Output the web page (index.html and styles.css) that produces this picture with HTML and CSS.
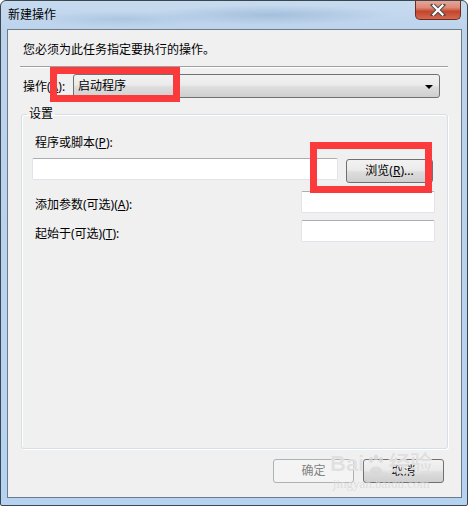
FILE: index.html
```html
<!DOCTYPE html>
<html lang="zh-CN">
<head>
    <meta charset="UTF-8">
    <meta name="viewport" content="width=device-width, initial-scale=1.0">
    <title>新建操作</title>
    <link rel="stylesheet" href="styles.css">
</head>
<body>
    <div class="window">
        <div class="titlebar">
            <span class="title">新建操作</span>
            <button class="close-button">
                <svg width="16" height="12" viewBox="0 0 16 12">
                    <path d="M3 1 L13 11 M13 1 L3 11" stroke="#4a4a4a" stroke-width="4.2" stroke-linecap="square"/>
                    <path d="M3.5 1.5 L12.5 10.5 M12.5 1.5 L3.5 10.5" stroke="#ffffff" stroke-width="2.2" stroke-linecap="square"/>
                </svg>
            </button>
        </div>

        <div class="client">
            <p class="intro">您必须为此任务指定要执行的操作。</p>
            <div class="separator"></div>

            <div class="action-row">
                <label class="action-label">操作(<u>A</u>):</label>
                <div class="combo">
                    <span>启动程序</span>
                    <span class="combo-arrow"></span>
                </div>
            </div>

            <fieldset class="settings">
                <legend>设置</legend>
                <div class="field-label">程序或脚本(<u>P</u>):</div>
                <div class="program-row">
                    <div class="textbox program-box"></div>
                    <button class="button browse-button">浏览(<u>R</u>)...</button>
                </div>
                <div class="option-row">
                    <span class="option-label">添加参数(可选)(<u>A</u>):</span>
                    <div class="textbox option-box"></div>
                </div>
                <div class="option-row">
                    <span class="option-label">起始于(可选)(<u>T</u>):</span>
                    <div class="textbox option-box"></div>
                </div>
            </fieldset>

            <div class="footer">
                <button class="button ok-button" disabled>确定</button>
                <button class="button">取消</button>
            </div>
        </div>

        <!-- annotations drawn over the screenshot -->
        <div class="mark mark-action"></div>
        <div class="mark mark-browse"></div>

        <div class="watermark">
            <div class="wm-logo">Bai<span class="wm-paw"><svg width="20" height="20" viewBox="0 0 20 20">
                <ellipse cx="5" cy="6" rx="2.2" ry="3" fill="currentColor"/>
                <ellipse cx="10" cy="3.5" rx="2.2" ry="3" fill="currentColor"/>
                <ellipse cx="15" cy="6" rx="2.2" ry="3" fill="currentColor"/>
                <path d="M4 17 C4 11 16 11 16 17 C16 20 4 20 4 17 Z" fill="currentColor"/>
            </svg></span>经验</div>
            <div class="wm-url">jingyan.baidu.com</div>
        </div>
    </div>
</body>
</html>
```

FILE: styles.css
```css
body {
    margin: 0;
    font-family: "Noto Sans", "Noto Sans CJK SC", sans-serif;
    font-size: 12px;
    color: #000;
    background-color: #ffffff;
}

.window {
    position: relative;
    width: 468px;
    height: 506px;
    box-sizing: border-box;
    border: 1px solid #3c4650;
    border-radius: 6px 6px 2px 2px;
    padding: 0 5px 7px 6px;
    display: flex;
    flex-direction: column;
    background:
        radial-gradient(ellipse 120px 10px at 270px 14px, rgba(140, 170, 205, 0.55), transparent),
        radial-gradient(ellipse 90px 8px at 120px 18px, rgba(150, 180, 210, 0.45), transparent),
        linear-gradient(to bottom, #c7dbef 0px, #bcd3ec 30px, #b5d3f1 100%);
    overflow: hidden;
}

.titlebar {
    height: 28px;
    display: flex;
    align-items: flex-start;
    padding-left: 1px;
}

.title {
    margin-top: 6px;
    line-height: 16px;
    color: #000;
}

.close-button {
    margin-left: auto;
    margin-right: 1px;
    margin-top: -1px;
    width: 46px;
    height: 20px;
    padding: 0;
    border: 1px solid #6b2b22;
    border-top: none;
    border-radius: 0 0 5px 5px;
    background: linear-gradient(to bottom, #e9a99a 0%, #dc8a78 40%, #c5452c 60%, #d2694e 100%);
    display: flex;
    justify-content: center;
    align-items: center;
    cursor: pointer;
}

.client {
    flex: 1;
    border: 1px solid #6e7c8a;
    background-color: #f0f0f0;
    padding: 12px 13px 0 13px;
}

.intro {
    margin: 0 0 0 2px;
    line-height: 16px;
}

.separator {
    margin: 8px 0 0 -1px;
    border-top: 1px solid #a0a0a0;
    border-bottom: 1px solid #ffffff;
}

.action-row {
    margin-top: 6px;
    display: flex;
    align-items: center;
    height: 24px;
}

.action-label {
    width: 52px;
    padding-left: 2px;
    box-sizing: border-box;
    line-height: 16px;
    margin-top: 2px;
}

.combo {
    width: 367px;
    height: 24px;
    box-sizing: border-box;
    border: 1px solid #707070;
    border-radius: 3px;
    background: linear-gradient(to bottom, #f2f2f2 0%, #ebebeb 45%, #dddddd 55%, #cfcfcf 100%);
    display: flex;
    align-items: center;
    padding: 0 6px 0 4px;
    line-height: 16px;
}

.combo-arrow {
    margin-left: auto;
    width: 0;
    height: 0;
    border-left: 4px solid transparent;
    border-right: 4px solid transparent;
    border-top: 4px solid #000;
    margin-top: 1px;
}

.settings {
    margin: 8px 0 0 0;
    height: 343px;
    box-sizing: border-box;
    border: 1px solid #d5dfe5;
    border-radius: 3px;
    padding: 0 12px 0 10px;
    box-shadow: inset 1px 1px 0 #ffffff, 1px 1px 0 #ffffff;
}

.settings legend {
    margin-left: -5px;
    padding: 0 2px;
    line-height: 16px;
}

.field-label {
    margin-top: 13px;
    padding-left: 3px;
    line-height: 16px;
}

.program-row {
    margin-top: 7px;
    display: flex;
    align-items: flex-start;
}

.textbox {
    height: 22px;
    box-sizing: border-box;
    background-color: #ffffff;
    border: 1px solid #e2e3ea;
    border-top-color: #abadb3;
    border-radius: 2px;
}

.program-box {
    width: 306px;
}

.button {
    height: 24px;
    box-sizing: border-box;
    border: 1px solid #707070;
    border-radius: 3px;
    background: linear-gradient(to bottom, #f2f2f2 0%, #ebebeb 45%, #dddddd 55%, #cfcfcf 100%);
    font-family: "Noto Sans", "Noto Sans CJK SC", sans-serif;
    font-size: 12px;
    color: #000;
    padding: 0;
    line-height: 16px;
    cursor: pointer;
}

.browse-button {
    width: 87px;
    margin-left: 8px;
    margin-top: 1px;
}

.option-row {
    margin-top: 8px;
    display: flex;
    justify-content: space-between;
    align-items: center;
}

.option-row + .option-row {
    margin-top: 7px;
}

.option-label {
    padding-left: 3px;
    line-height: 16px;
    margin-top: 5px;
}

.option-box {
    width: 134px;
}

.footer {
    margin-top: 10px;
    display: flex;
    justify-content: flex-end;
    gap: 9px;
    padding-right: 4px;
}

.footer .button {
    width: 81px;
}

.ok-button {
    border-color: #adb2b5;
    background: #f4f4f4;
    color: #838383;
    cursor: default;
}

.mark {
    position: absolute;
    box-sizing: border-box;
    border: 7px solid #fb3b3b;
}

.mark-action {
    left: 49px;
    top: 66px;
    width: 130px;
    height: 35px;
}

.mark-browse {
    left: 309px;
    top: 141px;
    width: 122px;
    height: 51px;
}

.watermark {
    position: absolute;
    left: 329px;
    top: 450px;
    color: rgba(215, 215, 215, 0.75);
    text-align: center;
    pointer-events: none;
}

.wm-logo {
    font-family: "Liberation Sans", "Noto Sans CJK SC", sans-serif;
    font-size: 22px;
    font-weight: bold;
    line-height: 26px;
    display: flex;
    align-items: center;
    text-shadow: 0 0 1px rgba(255, 255, 255, 0.9);
}

.wm-paw {
    display: flex;
    margin: 0 2px;
}

.wm-url {
    font-family: "Liberation Serif", serif;
    font-size: 13px;
    line-height: 14px;
    margin-left: 0;
}
```
